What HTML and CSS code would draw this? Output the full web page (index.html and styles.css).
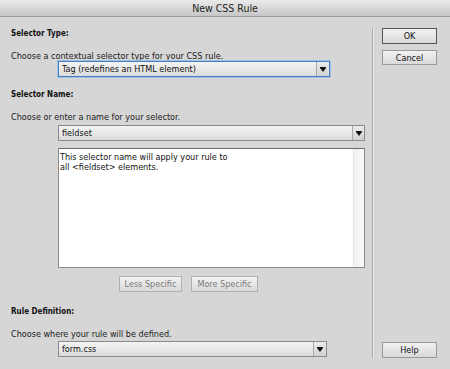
FILE: index.html
```html
<!DOCTYPE html>
<html>
<head>
<meta charset="utf-8">
<link rel="stylesheet" href="styles.css">
</head>
<body>
<div class="win">
  <div class="titlebar">New CSS Rule</div>
  <div class="body">
    <div class="main">
      <div class="label l1">Selector Type:</div>
      <div class="text t1">Choose a contextual selector type for your CSS rule.</div>
      <div class="select focus s1"><span class="val">Tag (redefines an HTML element)</span><span class="arrow"><svg width="6" height="5" viewBox="0 0 6 5"><path d="M0 0H6V1L3 5L0 1Z" fill="#111"/></svg></span></div>
      <div class="label l2">Selector Name:</div>
      <div class="text t2">Choose or enter a name for your selector.</div>
      <div class="select combo"><span class="val">fieldset</span><span class="arrow"><svg width="6" height="5" viewBox="0 0 6 5"><path d="M0 0H6V1L3 5L0 1Z" fill="#111"/></svg></span></div>
      <div class="desc"><div class="desctext">This selector name will apply your rule to<br>all &lt;fieldset&gt; elements.</div><div class="track"></div></div>
      <div class="specrow"><span class="btn dis less">Less Specific</span><span class="btn dis more">More Specific</span></div>
      <div class="label l3">Rule Definition:</div>
      <div class="text t3">Choose where your rule will be defined.</div>
      <div class="select s3"><span class="val">form.css</span><span class="arrow"><svg width="6" height="5" viewBox="0 0 6 5"><path d="M0 0H6V1L3 5L0 1Z" fill="#111"/></svg></span></div>
    </div>
    <div class="side">
      <span class="btn def">OK</span>
      <span class="btn cancel">Cancel</span>
      <span class="spacer"></span>
      <span class="btn help">Help</span>
    </div>
  </div>
</div>
</body>
</html>
```
FILE: styles.css
```css
* { box-sizing: border-box; }
html, body { margin: 0; padding: 0; }
body { background: #d6d6d6; font-family: "DejaVu Sans Condensed", "DejaVu Sans", sans-serif; font-size: 9px; color: #1a1a1a; }
.win { width: 450px; height: 369px; background: #d6d6d6; display: flex; flex-direction: column; overflow: hidden; }
.titlebar { height: 17px; line-height: 16px; text-align: center; font-size: 10.5px; color: #222;
  background: linear-gradient(#eaeaea, #c6c6c6); border-bottom: 1px solid #9a9a9a; }
.body { display: flex; flex: 1; }
.main { width: 372px; padding-left: 11px; display: flex; flex-direction: column; }
.label { font-weight: bold; font-size: 8px; line-height: 12px; height: 12px; color: #111; }
.text { line-height: 12px; height: 12px; font-size: 9px; white-space: nowrap; }
.l1 { margin-top: 11px; }
.t1 { margin-top: 10px; }
.s1 { margin-top: -1px; width: 272px; }
.l2 { margin-top: 12px; }
.t2 { margin-top: 10px; }
.combo { margin-top: 2px; width: 307px; background: #fff; }
.l3 { margin-top: 14px; }
.t3 { margin-top: 10px; }
.s3 { margin-top: 1px; width: 269px; }
.select { margin-left: 47px; height: 16px; border: 1px solid #8a8a8a; display: flex; align-items: stretch;
  background: linear-gradient(#f4f4f4, #dcdcdc); }
.select .val { flex: 1; padding-left: 3px; line-height: 14px; font-size: 9px; color: #111; white-space: nowrap; }
.select .arrow { width: 13px; border-left: 1px solid #a8a8a8; display: flex; align-items: center; justify-content: center;
  background: linear-gradient(#ececec, #d2d2d2); }
.combo .arrow { width: 12px; }
.focus { border: 1px solid #4a7fbf; box-shadow: 0 0 0 1px #9fc0e6; }
.desc { margin-left: 47px; margin-top: 7px; width: 307px; height: 120px; background: #fff; border: 1px solid #8a8a8a;
  border-top-color: #6e6e6e; display: flex; }
.desctext { flex: 1; padding: 3px 0 0 1px; font-size: 9px; line-height: 10px; color: #111; white-space: nowrap; }
.track { width: 11px; background: linear-gradient(90deg, #f0f0f0, #fafafa); border-left: 1px solid #e6e6e6; }
.specrow { display: flex; gap: 9px; margin-top: 8px; margin-left: 108px; }
.btn { height: 16px; border: 1px solid #9a9a9a; background: linear-gradient(#f2f2f2, #d9d9d9);
  display: flex; align-items: center; justify-content: center; font-size: 9px; color: #111; white-space: nowrap; }
.btn.dis { color: #7a7a7a; border-color: #b0b0b0; }
.less { width: 63px; }
.more { width: 67px; }
.side { flex: 1; border-left: 1px solid #a9a9a9; box-shadow: inset 1px 0 0 #ececec; margin: 11px 0 11px 0;
  display: flex; flex-direction: column; padding-left: 9px; }
.side .btn { width: 55px; }
.def { border: 1px solid #555; height: 16px; }
.cancel { margin-top: 6px; height: 15px; }
.spacer { flex: 1; }
.help { height: 16px; }
```
